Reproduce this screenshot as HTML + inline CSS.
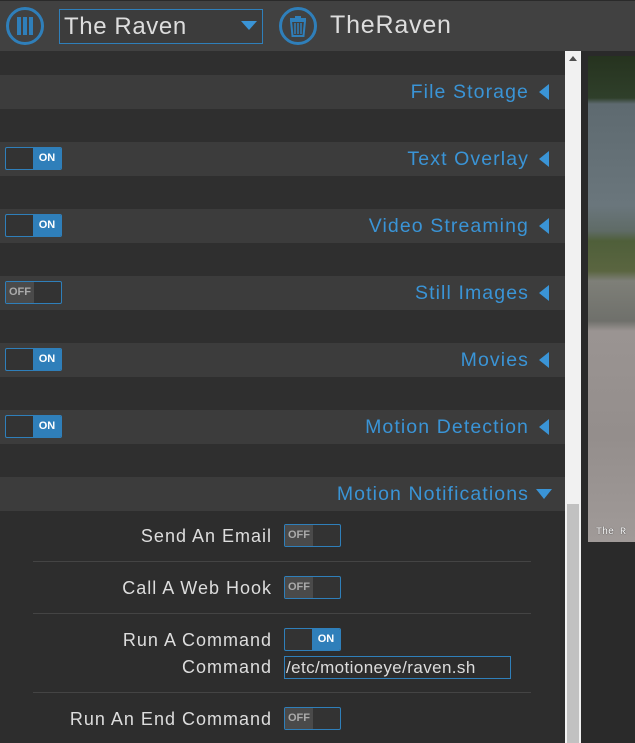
<!DOCTYPE html>
<html><head><style>
*{margin:0;padding:0;box-sizing:border-box}
body{width:635px;height:743px;overflow:hidden;background:#2f2f2f;font-family:"Liberation Sans",sans-serif;position:relative}
.abs{position:absolute}
.hdr{left:0;top:0;width:635px;height:51px;background:#414141;border-top:1px solid #2a2a2a}
.sec{left:0;width:565px;height:34px;background:#3c3c3c}
.sec span{position:absolute;right:36px;top:6px;font-size:19.5px;color:#3a94d6;letter-spacing:1.1px}
.tri{position:absolute;right:16px;top:9px;width:0;height:0;border-top:8px solid transparent;border-bottom:8px solid transparent;border-right:10px solid #3a94d6}
.tg{width:57px;height:23px;border:1px solid #2f7fba;border-radius:2px;background:#333;overflow:hidden}
.tg.on::after{content:"ON";position:absolute;right:0;top:0;width:28px;height:21px;background:#2f7fba;color:#fff;font-size:11px;font-weight:bold;line-height:21px;text-align:center}
.tg.off::after{content:"OFF";position:absolute;left:0;top:0;width:28px;height:21px;background:#4a4a4a;color:#aaa;font-size:11px;font-weight:bold;line-height:21px;text-align:center}
.lbl{font-size:18px;color:#ddd;text-align:right;width:272px;left:0;letter-spacing:1px}
.sep{left:33px;width:498px;height:1px;background:#444}
</style></head><body>
<div class="abs hdr"></div>
<div class="abs" style="left:6px;top:7px;width:38px;height:38px;border:3px solid #2f7fba;border-radius:50%"></div>
<div class="abs" style="left:17px;top:17px;width:4px;height:18px;background:#2f7fba"></div>
<div class="abs" style="left:23px;top:17px;width:4px;height:18px;background:#2f7fba"></div>
<div class="abs" style="left:29px;top:17px;width:4px;height:18px;background:#2f7fba"></div>
<div class="abs" style="left:59px;top:9px;width:204px;height:35px;border:1px solid #2f7fba;background:#3c3c3c;color:#ddd;font-size:24px;padding:3px 0 0 4px;letter-spacing:.6px">The Raven</div>
<div class="abs" style="left:241px;top:21px;border-left:8px solid transparent;border-right:8px solid transparent;border-top:9px solid #3a94d6"></div>
<div class="abs" style="left:279px;top:7px;width:38px;height:38px;border:3px solid #2f7fba;border-radius:50%"></div>
<svg class="abs" style="left:279px;top:7px" width="38" height="38" viewBox="0 0 38 38"><rect x="11" y="11" width="16" height="2" fill="#2f7fba"/><rect x="16" y="9" width="6" height="2" fill="#2f7fba"/><path d="M12 14h14l-1.5 15h-11z" fill="none" stroke="#2f7fba" stroke-width="2"/><path d="M16 16v11M19 16v11M22 16v11" stroke="#2f7fba" stroke-width="1.5"/></svg>
<div class="abs" style="left:330px;top:11px;font-size:25px;color:#ddd;letter-spacing:.8px">TheRaven</div>

<div class="abs sec" style="top:75px"><span>File Storage</span><i class="tri"></i></div>
<div class="abs sec" style="top:142px"><span>Text Overlay</span><i class="tri"></i><div class="abs tg on" style="left:5px;top:5px"></div></div>
<div class="abs sec" style="top:209px"><span>Video Streaming</span><i class="tri"></i><div class="abs tg on" style="left:5px;top:5px"></div></div>
<div class="abs sec" style="top:276px"><span>Still Images</span><i class="tri"></i><div class="abs tg off" style="left:5px;top:5px"></div></div>
<div class="abs sec" style="top:343px"><span>Movies</span><i class="tri"></i><div class="abs tg on" style="left:5px;top:5px"></div></div>
<div class="abs sec" style="top:410px"><span>Motion Detection</span><i class="tri"></i><div class="abs tg on" style="left:5px;top:5px"></div></div>
<div class="abs sec" style="top:477px"><span>Motion Notifications</span><i class="abs" style="right:13px;top:12px;border-left:8px solid transparent;border-right:8px solid transparent;border-top:10px solid #3a94d6"></i></div>
<div class="abs" style="left:0;top:511px;width:565px;height:232px;background:#2d2d2d"></div>

<div class="abs lbl" style="top:526px">Send An Email</div>
<div class="abs tg off" style="left:284px;top:524px"></div>
<div class="abs sep" style="top:561px"></div>
<div class="abs lbl" style="top:578px">Call A Web Hook</div>
<div class="abs tg off" style="left:284px;top:576px"></div>
<div class="abs sep" style="top:613px"></div>
<div class="abs lbl" style="top:630px">Run A Command</div>
<div class="abs tg on" style="left:284px;top:628px"></div>
<div class="abs lbl" style="top:657px">Command</div>
<div class="abs" style="left:284px;top:656px;width:227px;height:23px;border:1px solid #2f7fba;background:#2d2d2d;color:#ddd;font-size:17px;padding-left:1px;line-height:21px;letter-spacing:.4px">/etc/motioneye/raven.sh</div>
<div class="abs sep" style="top:692px"></div>
<div class="abs lbl" style="top:709px">Run An End Command</div>
<div class="abs tg off" style="left:284px;top:707px"></div>

<div class="abs" style="left:565px;top:51px;width:16px;height:692px;background:#f1f1f1"></div>
<div class="abs" style="left:569px;top:56px;border-left:4px solid transparent;border-right:4px solid transparent;border-bottom:5px solid #505050"></div>
<div class="abs" style="left:567px;top:504px;width:12px;height:239px;background:#c1c1c1"></div>
<div class="abs" style="left:581px;top:51px;width:54px;height:692px;background:#2a2a2a"></div>
<div class="abs" style="left:588px;top:56px;width:47px;height:486px;background:linear-gradient(#26331f 0px,#2f3f2a 42px,#5e6a70 48px,#6a767c 150px,#5f6b66 175px,#4f5f3a 185px,#5a6540 215px,#7e7f78 225px,#6f706b 265px,#9a9492 275px,#948e8c 380px,#a09a98 486px)"></div>
<div class="abs" style="left:596px;top:527px;font-size:10px;color:#fff;font-family:'Liberation Mono',monospace;text-shadow:0 0 1px #000">The R</div>
</body></html>
